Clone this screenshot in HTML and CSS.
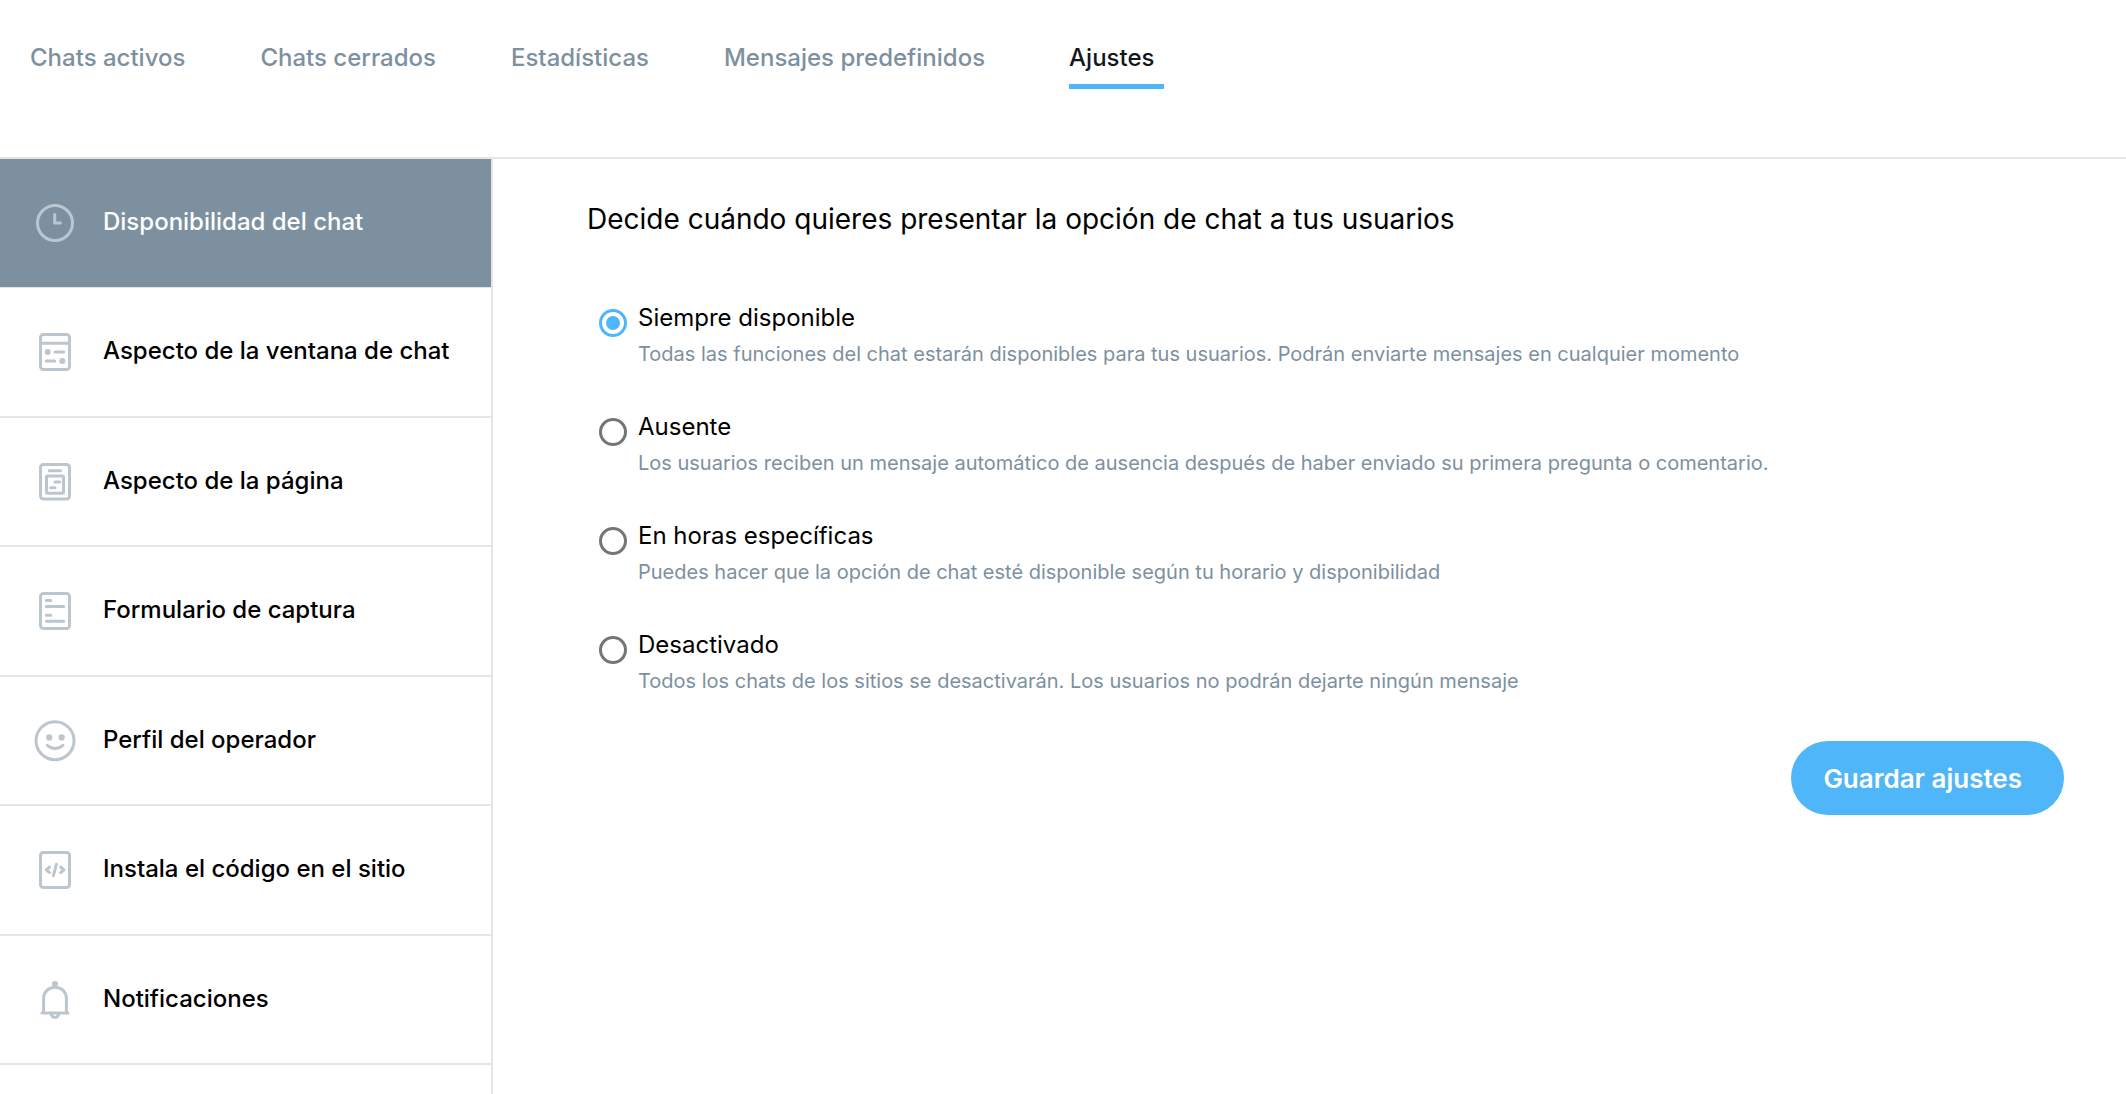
FILE: index.html
```html
<!DOCTYPE html>
<html lang="es">
<head>
    <meta charset="UTF-8">
    <title>Ajustes del chat</title>
    <link rel="stylesheet" href="styles.css">
</head>
<body>
    <nav class="tabs">
        <a class="tab" href="#">Chats activos</a>
        <a class="tab" href="#">Chats cerrados</a>
        <a class="tab" href="#">Estadísticas</a>
        <a class="tab" href="#">Mensajes predefinidos</a>
        <a class="tab active" href="#">Ajustes</a>
    </nav>

    <div class="layout">
        <!-- Menú lateral -->
        <nav class="sidebar">
            <a class="menu-item active" href="#">
                <svg class="icon" viewBox="0 0 42 42"><circle cx="21" cy="21" r="17.5"/><path d="M20.7 12.5V21H26.5"/></svg>
                <span>Disponibilidad del chat</span>
            </a>
            <a class="menu-item" href="#">
                <svg class="icon" viewBox="0 0 42 42"><rect x="6.5" y="3.5" width="29" height="35" rx="3"/><path d="M6.5 12.3H35.5M21 21H29.7M12.3 30H20.7"/><circle class="dot" cx="13.7" cy="21" r="3"/><circle class="dot" cx="28.3" cy="30" r="3"/></svg>
                <span>Aspecto de la ventana de chat</span>
            </a>
            <a class="menu-item" href="#">
                <svg class="icon" viewBox="0 0 42 42"><rect x="6.5" y="3.5" width="29" height="34.5" rx="3"/><rect x="12.5" y="15" width="17" height="17.3" rx="1"/><path d="M15.3 9.7H26.7M21 21H25.7M16.7 26.8H21"/></svg>
                <span>Aspecto de la página</span>
            </a>
            <a class="menu-item" href="#">
                <svg class="icon" viewBox="0 0 42 42"><rect x="6.5" y="3.5" width="29" height="35" rx="3"/><path d="M12.3 10.5H16.7M12.3 16.4H29.7M12.3 25.2H16.7M12.3 31.2H29.7"/></svg>
                <span>Formulario de captura</span>
            </a>
            <a class="menu-item" href="#">
                <svg class="icon" viewBox="0 0 42 42"><circle cx="21" cy="20.7" r="19"/><path d="M13.3 25.3C17.5 29.6 24.8 29.6 29 25.3"/><circle class="dot" cx="15.2" cy="17.4" r="3.1"/><circle class="dot" cx="27.7" cy="17.4" r="3.1"/></svg>
                <span>Perfil del operador</span>
            </a>
            <a class="menu-item" href="#">
                <svg class="icon" viewBox="0 0 42 42"><rect x="6.5" y="3.5" width="29" height="35" rx="3"/><path d="M15.5 18L12.3 20.8L15.5 23.6M26.7 18L29.9 20.8L26.7 23.6M22.4 15.2L19.4 26.6"/></svg>
                <span>Instala el código en el sitio</span>
            </a>
            <a class="menu-item" href="#">
                <svg class="icon" viewBox="0 0 42 42"><path d="M8 34H34M9.6 34V19.5C9.6 12.8 14.5 8.2 21 8.2S32.4 12.8 32.4 19.5V34M17.2 34.5C17.6 37.6 19 38.4 21 38.4S24.4 37.6 24.8 34.5"/><circle class="dot" cx="21" cy="5" r="3"/></svg>
                <span>Notificaciones</span>
            </a>
        </nav>

        <!-- Opciones de disponibilidad -->
        <main class="content">
            <h1 class="title">Decide cuándo quieres presentar la opción de chat a tus usuarios</h1>
            <form class="form">
                <div class="option">
                    <input class="radio" type="radio" name="availability" id="always" checked>
                    <label class="option-text" for="always">
                        <span class="option-name">Siempre disponible</span>
                        <span class="option-desc">Todas las funciones del chat estarán disponibles para tus usuarios. Podrán enviarte mensajes en cualquier momento</span>
                    </label>
                </div>
                <div class="option">
                    <input class="radio" type="radio" name="availability" id="away">
                    <label class="option-text" for="away">
                        <span class="option-name">Ausente</span>
                        <span class="option-desc">Los usuarios reciben un mensaje automático de ausencia después de haber enviado su primera pregunta o comentario.</span>
                    </label>
                </div>
                <div class="option">
                    <input class="radio" type="radio" name="availability" id="hours">
                    <label class="option-text" for="hours">
                        <span class="option-name">En horas específicas</span>
                        <span class="option-desc">Puedes hacer que la opción de chat esté disponible según tu horario y disponibilidad</span>
                    </label>
                </div>
                <div class="option">
                    <input class="radio" type="radio" name="availability" id="off">
                    <label class="option-text" for="off">
                        <span class="option-name">Desactivado</span>
                        <span class="option-desc">Todos los chats de los sitios se desactivarán. Los usuarios no podrán dejarte ningún mensaje</span>
                    </label>
                </div>
                <button class="save" type="button">Guardar ajustes</button>
            </form>
        </main>
    </div>
</body>
</html>
```
FILE: styles.css
```css
* {
    box-sizing: border-box;
}

body {
    margin: 0;
    min-height: 100vh;
    display: flex;
    flex-direction: column;
    background-color: #fff;
    color: #000;
    font-family: Inter, sans-serif;
}

a {
    text-decoration: none;
}

.tabs {
    display: flex;
    align-items: flex-start;
    gap: 75px;
    padding: 41px 30px 68px;
    border-bottom: 2px solid #e5e5e5;
}

.tab {
    color: #7d909f;
    font-size: 24px;
    font-weight: 500;
    line-height: 34px;
    padding-bottom: 9px;
    border-bottom: 5px solid transparent;
}

.tab.active {
    color: #14171a;
    margin-left: 9px;
    padding-right: 10px;
    border-color: #4fb6f9;
}

.layout {
    flex: 1;
    display: flex;
}

.sidebar {
    flex: 0 0 493px;
    border-right: 2px solid #e5e5e5;
}

.menu-item {
    display: flex;
    align-items: center;
    gap: 27px;
    height: 129px;
    padding-left: 34px;
    border-bottom: 2px solid #e5e5e5;
    color: #000;
    font-size: 24px;
    font-weight: 500;
    line-height: 32px;
}

.menu-item:nth-child(even) {
    height: 130px;
}

.menu-item.active {
    background-color: #7d909f;
    border-bottom-width: 1px;
    color: #fff;
}

.menu-item span {
    padding-bottom: 2px;
}

.icon {
    width: 42px;
    height: 42px;
    fill: none;
    stroke: #bcc6cf;
    stroke-width: 3;
    stroke-linecap: round;
    stroke-linejoin: round;
}

.dot {
    fill: #bcc6cf;
    stroke: none;
}

.content {
    flex: 1;
    padding: 42px 62px 40px 94px;
}

.title {
    margin: 0 0 62px;
    font-size: 28px;
    font-weight: 400;
    line-height: 36px;
}

.form {
    display: flex;
    flex-direction: column;
}

.option {
    display: flex;
    gap: 11px;
    margin-bottom: 37px;
    padding-left: 12px;
}

.radio {
    appearance: none;
    flex: none;
    display: grid;
    place-items: center;
    width: 28px;
    height: 28px;
    margin: 10px 0 0;
    border: 3px solid #757575;
    border-radius: 50%;
}

.radio:checked {
    border-color: #4fb6f9;
}

.radio:checked::before {
    content: "";
    width: 14px;
    height: 14px;
    border-radius: 50%;
    background-color: #4fb6f9;
}

.option-text {
    display: flex;
    flex-direction: column;
}

.option-name {
    font-size: 24px;
    line-height: 38px;
}

.option-desc {
    color: #7d909f;
    font-size: 20px;
    line-height: 34px;
}

.save {
    align-self: flex-end;
    height: 74px;
    margin-top: 6px;
    padding: 0 42px 0 32px;
    border: none;
    border-radius: 37px;
    background-color: #4fb6f9;
    color: #fff;
    font-family: inherit;
    font-size: 26px;
    font-weight: 600;
    cursor: pointer;
}
```
